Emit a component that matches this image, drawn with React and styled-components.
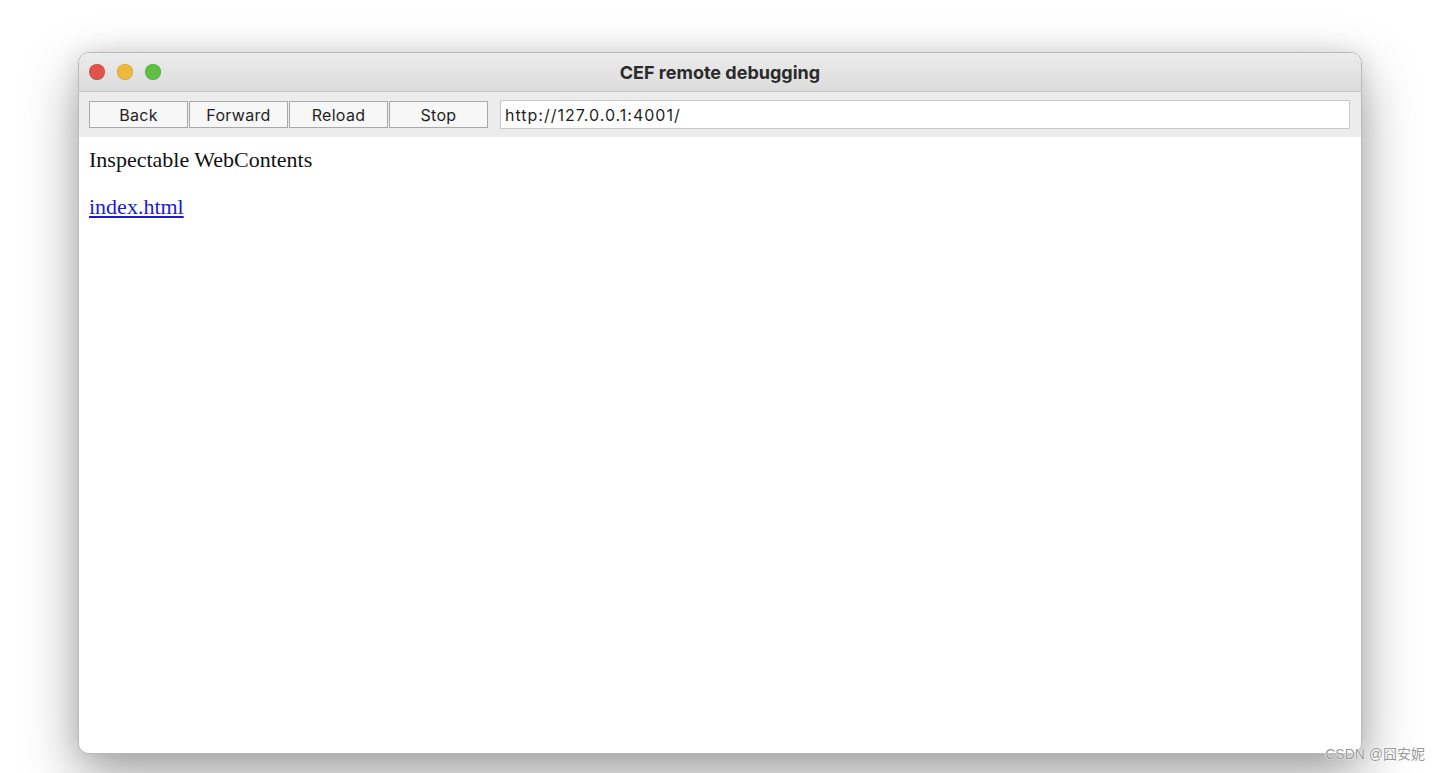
import React from 'react'
import styled, { createGlobalStyle } from 'styled-components'

const GlobalStyle = createGlobalStyle`
  html, body { margin: 0; padding: 0; background: #ffffff; }
  body { font-family: "Liberation Sans", Arial, sans-serif; }
`;

const Page = styled.div`
  position: relative;
  width: 1440px;
  height: 773px;
  box-sizing: border-box;
  padding: 52px 78px 19px 78px;
  overflow: hidden;
  background: #fff;
`;

const Window = styled.div`
  height: 100%;
  display: flex;
  flex-direction: column;
  border-radius: 11px;
  border: 1px solid #b9b9b9;
  box-sizing: border-box;
  background: #fff;
  overflow: hidden;
  box-shadow: 0 22px 55px rgba(0, 0, 0, 0.36), 0 0 22px rgba(0, 0, 0, 0.1);
`;

const TitleBar = styled.div`
  position: relative;
  height: 38px;
  flex-shrink: 0;
  display: flex;
  align-items: center;
  justify-content: center;
  background: linear-gradient(#ececec, #dcdcdc);
  border-bottom: 1px solid #c6c6c6;
`;

const Lights = styled.div`
  position: absolute;
  left: 10px;
  top: 11px;
  display: flex;
  gap: 12px;
`;

const Light = styled.span`
  width: 16px;
  height: 16px;
  border-radius: 50%;
  background: ${p => p.color};
  box-shadow: inset 0 0 0 0.5px rgba(0, 0, 0, 0.15);
`;

const Title = styled.div`
  font-family: "Inter", "Liberation Sans", sans-serif;
  font-weight: 700;
  font-size: 18px;
  color: #2b2b2b;
`;

const Toolbar = styled.div`
  height: 45px;
  flex-shrink: 0;
  display: flex;
  align-items: center;
  box-sizing: border-box;
  padding: 0 11px 0 10px;
  background: #ececec;
`;

const Buttons = styled.div`
  display: flex;
  gap: 1px;
  margin-right: 12px;
`;

const Button = styled.button`
  width: 99px;
  height: 27px;
  margin: 0;
  padding: 0;
  box-sizing: border-box;
  border: 1px solid #a9a9a9;
  border-radius: 0;
  background: #f7f7f7;
  font-family: "Inter", "Liberation Sans", sans-serif;
  font-size: 16px;
  letter-spacing: 0.3px;
  color: #1f1f1f;
`;

const UrlField = styled.div`
  flex: 1;
  height: 29px;
  box-sizing: border-box;
  border: 1px solid #c8c8c8;
  background: #fff;
  display: flex;
  align-items: center;
  padding-left: 4px;
  font-family: "Inter", "Liberation Sans", sans-serif;
  font-size: 16px;
  letter-spacing: 1px;
  color: #1f1f1f;
`;

const Content = styled.div`
  flex: 1;
  padding: 10px 10px;
  background: #fff;
  font-family: "Liberation Serif", "Times New Roman", serif;
  font-size: 22px;
  color: #111;
`;

const Heading = styled.p`
  margin: 0 0 22px 0;
  line-height: 25px;
`;

const Link = styled.a`
  color: #1a1ad6;
  text-decoration: underline;
  line-height: 25px;
`;

const Watermark = styled.div`
  position: absolute;
  right: 15px;
  bottom: 10px;
  font-family: "Liberation Sans", "Noto Sans CJK SC", sans-serif;
  font-size: 14px;
  color: #9a9a9a;
  text-shadow: 0 0 2px #fff, 0 0 1px #fff;
`;

const App = () => {
  return (
    <Page>
      <GlobalStyle />
      <Window>
        <TitleBar>
          <Lights>
            <Light color="#e0524a" />
            <Light color="#ecb93a" />
            <Light color="#5dc042" />
          </Lights>
          <Title>CEF remote debugging</Title>
        </TitleBar>
        <Toolbar>
          <Buttons>
            <Button>Back</Button>
            <Button>Forward</Button>
            <Button>Reload</Button>
            <Button>Stop</Button>
          </Buttons>
          <UrlField>http://127.0.0.1:4001/</UrlField>
        </Toolbar>
        <Content>
          <Heading>Inspectable WebContents</Heading>
          <Link href="#">index.html</Link>
        </Content>
      </Window>
      <Watermark>CSDN @囧安妮</Watermark>
    </Page>
  )
}

export default App
